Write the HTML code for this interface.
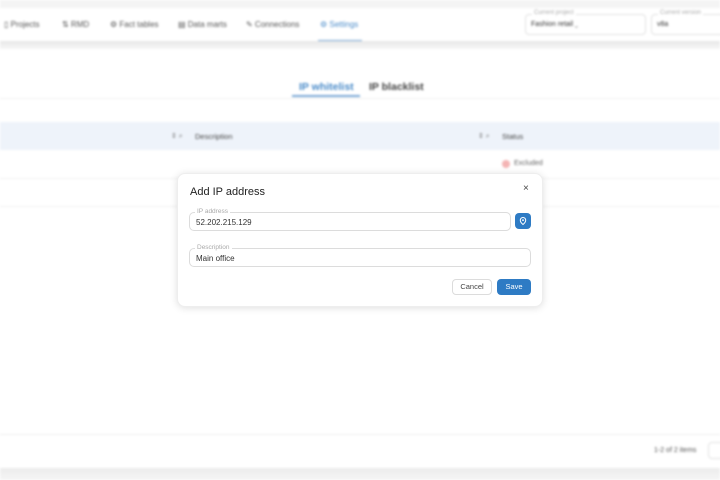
<!DOCTYPE html>
<html><head><style>
*{box-sizing:border-box;margin:0;padding:0}
body{width:720px;height:480px;overflow:hidden;background:#fff;font-family:"Liberation Sans",sans-serif;position:relative}
#bg{position:absolute;inset:0;filter:blur(1px)}
.a{position:absolute}
.nav span{position:absolute;font-size:8px;color:#555}
.fs{position:absolute;border:1px solid #e2e2e2;border-radius:4px;background:#fff}
.lbl{position:absolute;top:-5px;left:6px;background:#fff;padding:0 2px;font-size:6px;color:#aaa}
.modal{position:absolute;left:177px;top:173px;width:366px;height:134px;background:#fff;border-radius:8px;box-shadow:0 1px 8px rgba(0,0,0,.13);border:1px solid #eee}
.in{position:absolute;border:1px solid #dcdcdc;border-radius:5px;height:19px;font-size:8px;color:#333;padding:5px 6px}
.in .l{position:absolute;top:-5px;left:5px;background:#fff;padding:0 2px;font-size:6.5px;color:#aaa}
</style></head><body>
<div id="bg">
<div class="a" style="left:0;top:0;width:720px;height:8px;background:#f4f4f4"></div>
<div class="a nav" style="left:0;top:8px;width:720px;height:33px;background:#fff">
<span style="left:4px;top:12px">▯ Projects</span>
<span style="left:62px;top:12px">⇅ RMD</span>
<span style="left:110px;top:12px">⚙ Fact tables</span>
<span style="left:178px;top:12px">▤ Data marts</span>
<span style="left:246px;top:12px">✎ Connections</span>
<span style="left:320px;top:12px;color:#4a8bc9">⚙ Settings</span>
<div class="a" style="left:318px;top:32px;width:44px;height:2px;background:#7aa8d6"></div>
<div class="fs" style="left:525px;top:6px;width:121px;height:21px"><div class="lbl">Current project</div><div style="font-size:7px;margin:6px 5px;color:#333">Fashion retail<span style="float:right;color:#aaa">⌄</span></div></div>
<div class="fs" style="left:651px;top:6px;width:80px;height:21px"><div class="lbl">Current version</div><div style="font-size:7px;margin:6px 5px;color:#333">v8a</div></div>
</div>
<div class="a" style="left:0;top:41px;width:720px;height:8px;background:linear-gradient(#e8e8e8,#f6f6f6)"></div>
<div class="a" style="left:299px;top:81px;font-size:10.5px;font-weight:bold;color:#4a8bc9">IP whitelist</div>
<div class="a" style="left:369px;top:81px;font-size:10.5px;font-weight:bold;color:#444">IP blacklist</div>
<div class="a" style="left:292px;top:95px;width:68px;height:2px;background:#7aa8d6"></div>
<div class="a" style="left:0;top:98px;width:720px;height:1px;background:#f0f0f0"></div>
<div class="a" style="left:0;top:122px;width:720px;height:28px;background:#eef3fa"></div>
<div class="a" style="left:171px;top:132px;font-size:7px;color:#777">⇕ ⌕</div>
<div class="a" style="left:195px;top:132px;font-size:7.5px;color:#444">Description</div>
<div class="a" style="left:478px;top:132px;font-size:7px;color:#777">⇕ ⌕</div>
<div class="a" style="left:502px;top:132px;font-size:7.5px;color:#444">Status</div>
<div class="a" style="left:502px;top:160px;width:8px;height:8px;border-radius:50%;background:#f4b4b4"></div>
<div class="a" style="left:514px;top:160px;font-size:7px;color:#666">Excluded</div>
<div class="a" style="left:0;top:178px;width:720px;height:1px;background:#f0f0f0"></div>
<div class="a" style="left:0;top:206px;width:720px;height:1px;background:#f0f0f0"></div>
<div class="a" style="left:0;top:434px;width:720px;height:1px;background:#eee"></div>
<div class="a" style="left:654px;top:447px;font-size:7px;color:#555">1-2 of 2 items</div>
<div class="a" style="left:708px;top:442px;width:20px;height:17px;border:1px solid #e2e2e2;border-radius:4px"></div>
<div class="a" style="left:0;top:468px;width:720px;height:12px;background:linear-gradient(#ececec,#f5f5f5)"></div>
</div>
<div class="modal">
<div class="a" style="left:12px;top:12px;font-size:11px;color:#222">Add IP address</div>
<div class="a" style="left:345px;top:9px;font-size:10px;color:#444">×</div>
<div class="in" style="left:11px;top:38px;width:322px"><span class="l">IP address</span>52.202.215.129</div>
<div class="a" style="left:337px;top:39px;width:16px;height:16px;border-radius:4px;background:#2e7bc4">
<svg width="16" height="16" viewBox="0 0 16 16"><path d="M8 4.5a2.7 2.7 0 0 0-2.7 2.7c0 2 2.7 4.3 2.7 4.3s2.7-2.3 2.7-4.3A2.7 2.7 0 0 0 8 4.5z" fill="none" stroke="#fff" stroke-width="1"/><circle cx="8" cy="7.2" r="0.9" fill="#fff"/></svg></div>
<div class="in" style="left:11px;top:74px;width:342px"><span class="l">Description</span>Main office</div>
<div class="a" style="left:274px;top:105px;width:40px;height:16px;border:1px solid #dcdcdc;border-radius:4px;font-size:7.5px;color:#444;text-align:center;line-height:14px">Cancel</div>
<div class="a" style="left:319px;top:105px;width:34px;height:16px;background:#2e7bc4;border-radius:4px;font-size:7.5px;color:#fff;text-align:center;line-height:16px">Save</div>
</div>
</body></html>
